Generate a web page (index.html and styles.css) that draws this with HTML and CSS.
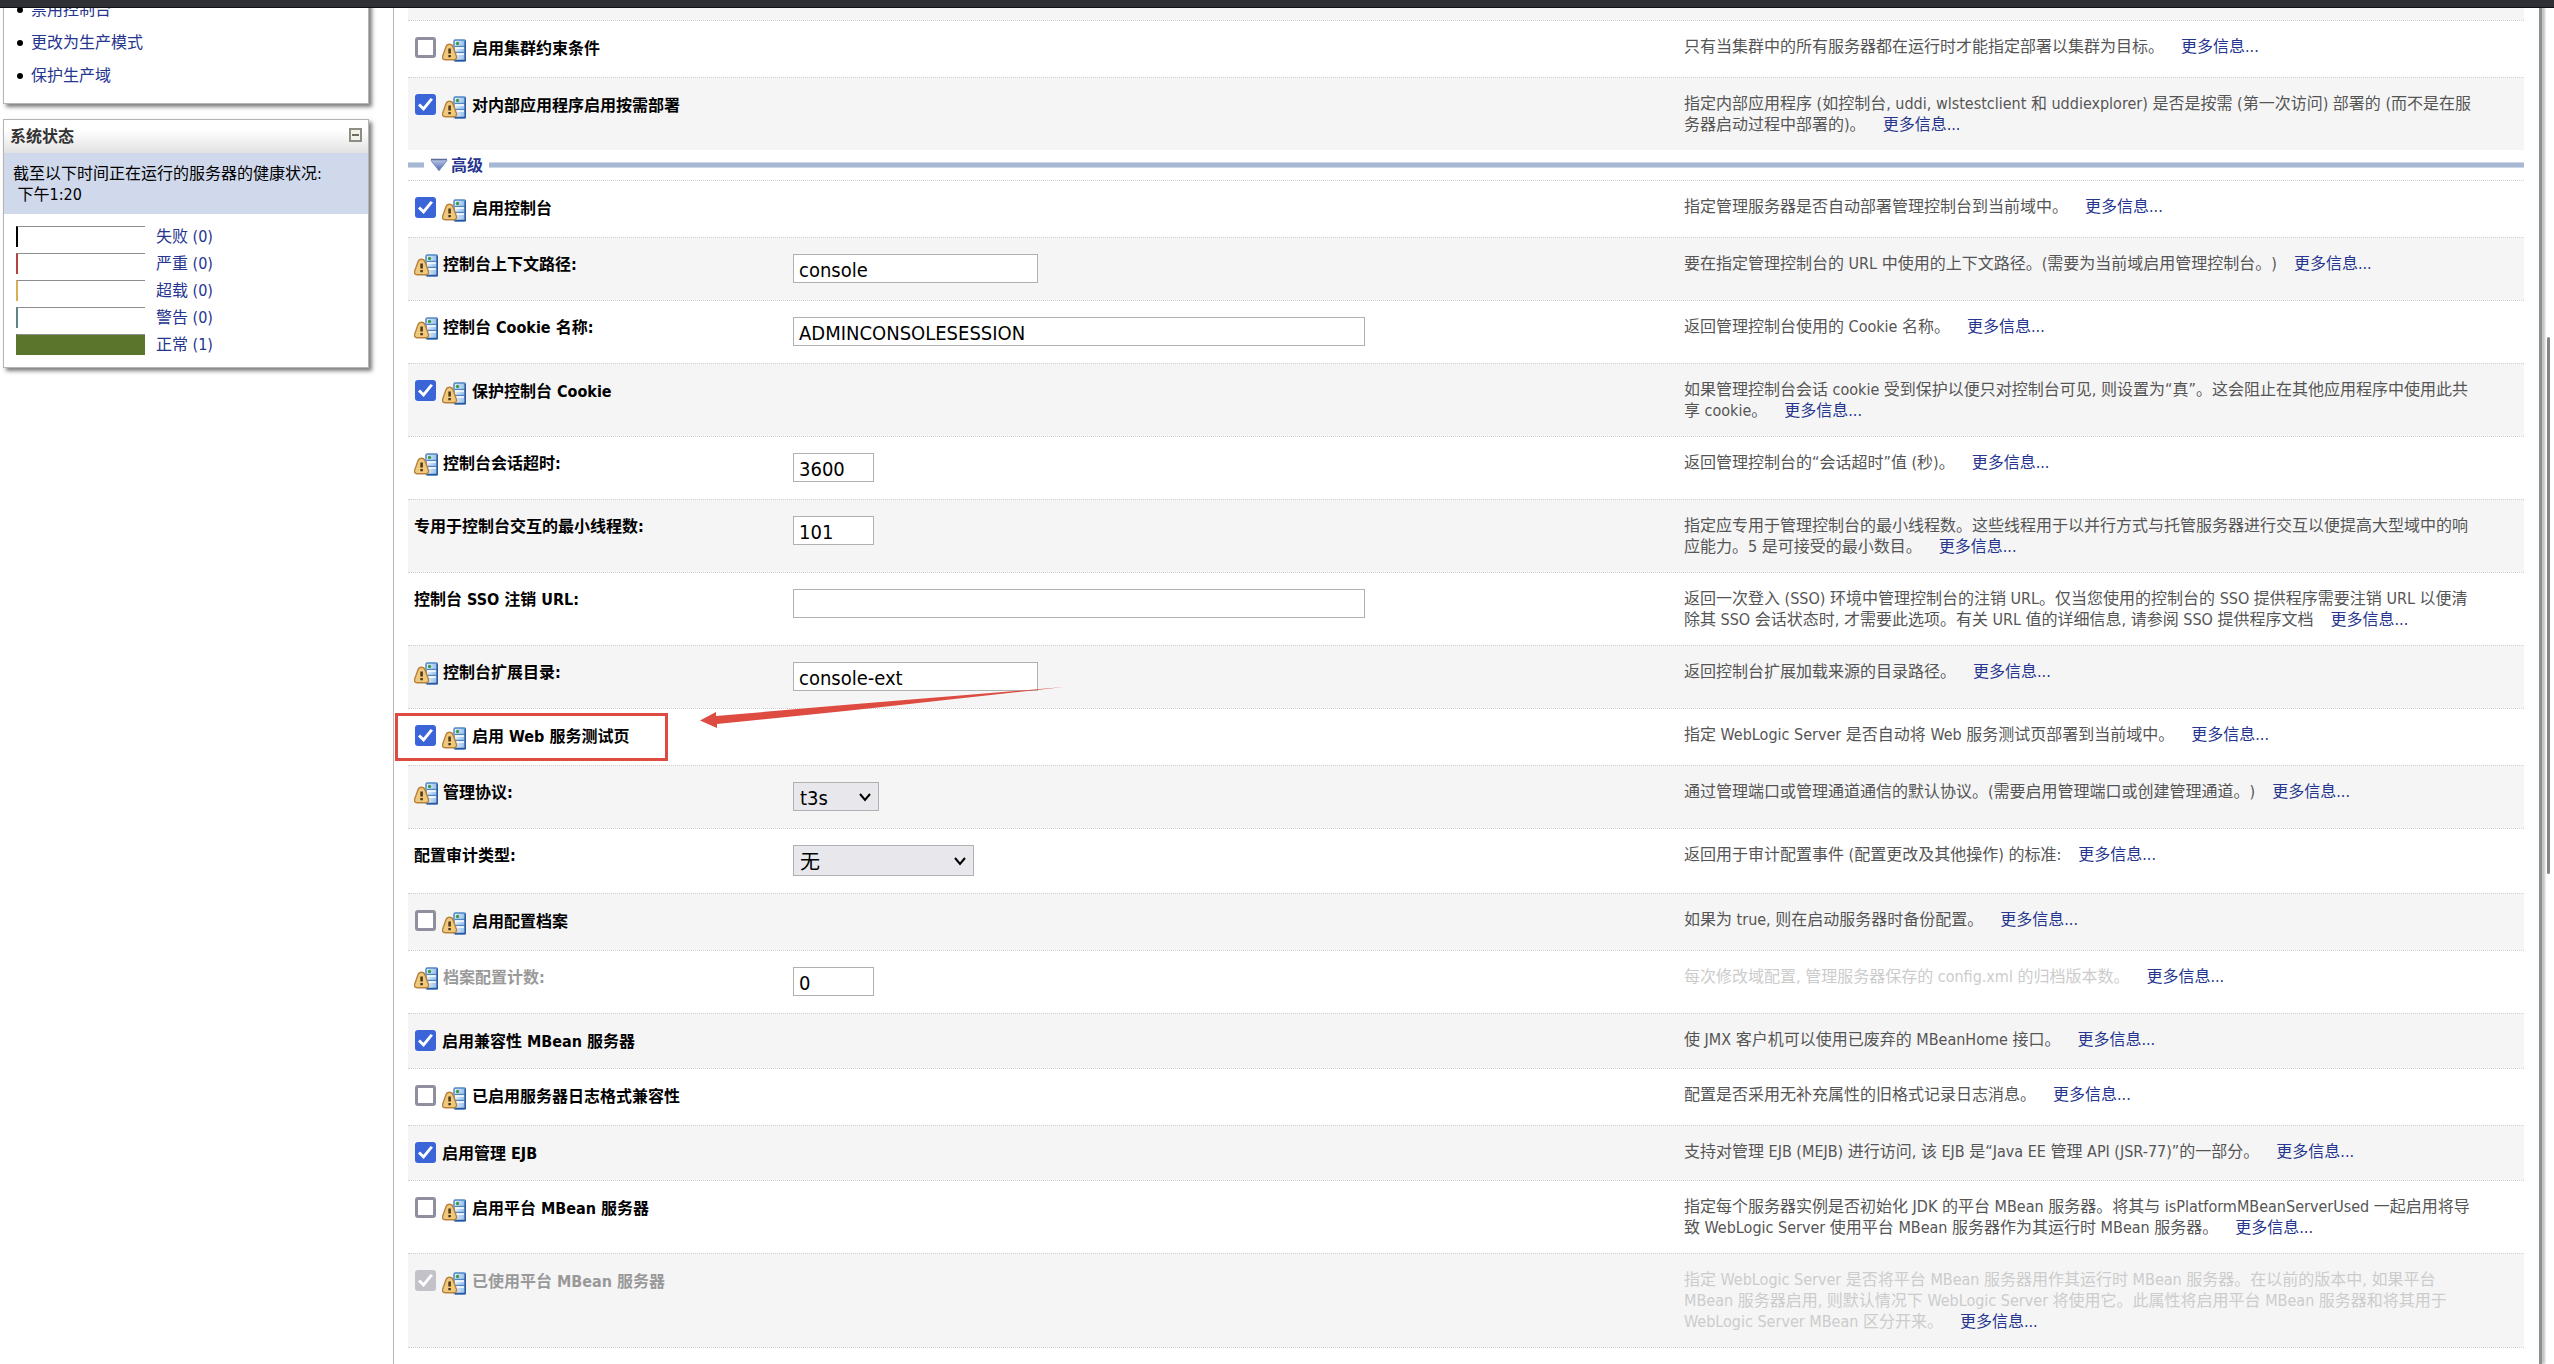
FILE: index.html
```html
<!DOCTYPE html>
<html lang="zh-CN">
<head>
<meta charset="utf-8">
<title>域配置</title>
<link rel="stylesheet" href="styles.css">
</head>
<body>
<svg class="defs" aria-hidden="true">
  <defs>
    <linearGradient id="srv" x1="0" x2="1"><stop offset="0" stop-color="#e8f3fc"/><stop offset="1" stop-color="#8fbbe8"/></linearGradient>
    <linearGradient id="tri" x1="0" y1="0" x2="0" y2="1"><stop offset="0" stop-color="#c3cfe8"/><stop offset="1" stop-color="#4a63b0"/></linearGradient>
    <symbol id="restart" viewBox="0 0 24 23">
      <rect x="12" y="1" width="11.500" height="21" rx="1.500" fill="url(#srv)" stroke="#4f86c6" stroke-width="1.500"/>
      <path d="M13 7.500h10M13 13.500h10" stroke="#4f86c6" stroke-width="1.500"/>
      <path d="M13 9h9M13 15h9" stroke="#fff" stroke-width="1.500"/>
      <path d="M23.200 2v19.500H13" fill="none" stroke="#2a569c" stroke-width="1.400"/>
      <circle cx="15.500" cy="4.500" r="1.700" fill="#3f9a4a"/>
      <path d="M7.500 5.300c2 0 3 1.200 3.600 2.800l3.200 8.800c.8 2.200-.2 3.900-2.300 3.900H3c-2.100 0-3.100-1.700-2.300-3.900l3.200-8.800c.6-1.600 1.600-2.800 3.600-2.800z" fill="#efc97e" stroke="#b9823c" stroke-width="1.400"/>
      <path d="M7.600 9.500v5M7.600 16v2.300" stroke="#4a3512" stroke-width="2.500"/>
    </symbol>
  </defs>
</svg>
<header class="topbar"></header>
<div class="page">
  <aside class="sidebar">
    <section class="box">
      <ul class="tasks">
        <li><a href="#">禁用控制台</a></li>
        <li><a href="#">更改为生产模式</a></li>
        <li><a href="#">保护生产域</a></li>
      </ul>
    </section>
    <section class="box">
      <div class="box-head"><h2>系统状态</h2><button type="button" class="collapse" aria-label="折叠"></button></div>
      <p class="asof">截至以下时间正在运行的服务器的健康状况:<br>&nbsp;下午1:20</p>
      <ul class="health">
        <li><span class="bar failed"></span><a href="#">失败 (0)</a></li>
        <li><span class="bar critical"></span><a href="#">严重 (0)</a></li>
        <li><span class="bar overloaded"></span><a href="#">超载 (0)</a></li>
        <li><span class="bar warning"></span><a href="#">警告 (0)</a></li>
        <li><span class="bar ok"></span><a href="#">正常 (1)</a></li>
      </ul>
    </section>
  </aside>
  <main class="content">
    <form class="form">
      <div class="group first">
        <div class="row"></div>
        <div class="row">
          <div class="name check"><input type="checkbox" id="f1"><svg class="icon"><use href="#restart"/></svg><label for="f1">启用集群约束条件</label></div>
          <p class="desc">只有当集群中的所有服务器都在运行时才能指定部署以集群为目标。<a href="#">更多信息...</a></p>
        </div>
        <div class="row">
          <div class="name check"><input type="checkbox" id="f2" checked><svg class="icon"><use href="#restart"/></svg><label for="f2">对内部应用程序启用按需部署</label></div>
          <p class="desc">指定内部应用程序 (如控制台, uddi, wlstestclient 和 uddiexplorer) 是否是按需 (第一次访问) 部署的 (而不是在服<br>务器启动过程中部署的)。<a href="#">更多信息...</a></p>
        </div>
      </div>
      <div class="advanced">
        <a href="#"><svg width="18" height="14" viewBox="0 0 18 14"><path d="M1 1h16v2L9 13 1 3z" fill="url(#tri)"/><path d="M1 1.500h16" stroke="#5a6c9c" stroke-width="1.500"/><path d="M1 2.500 9 12.500 17 2.500" fill="none" stroke="#7a8fc4" stroke-width="1"/></svg>高级</a>
      </div>
      <div class="group">
        <div class="row">
          <div class="name check"><input type="checkbox" id="g1" checked><svg class="icon"><use href="#restart"/></svg><label for="g1">启用控制台</label></div>
          <p class="desc">指定管理服务器是否自动部署管理控制台到当前域中。<a href="#">更多信息...</a></p>
        </div>
        <div class="row">
          <div class="name"><svg class="icon"><use href="#restart"/></svg><label for="g2">控制台上下文路径:</label></div>
          <div class="control"><input type="text" class="mid" id="g2" value="console"></div>
          <p class="desc">要在指定管理控制台的 URL 中使用的上下文路径。(需要为当前域启用管理控制台。)<a href="#">更多信息...</a></p>
        </div>
        <div class="row">
          <div class="name"><svg class="icon"><use href="#restart"/></svg><label for="g3">控制台 Cookie 名称:</label></div>
          <div class="control"><input type="text" class="long" id="g3" value="ADMINCONSOLESESSION"></div>
          <p class="desc">返回管理控制台使用的 Cookie 名称。<a href="#">更多信息...</a></p>
        </div>
        <div class="row">
          <div class="name check"><input type="checkbox" id="g4" checked><svg class="icon"><use href="#restart"/></svg><label for="g4">保护控制台 Cookie</label></div>
          <p class="desc">如果管理控制台会话 cookie 受到保护以便只对控制台可见, 则设置为“真”。这会阻止在其他应用程序中使用此共<br>享 cookie。<a href="#">更多信息...</a></p>
        </div>
        <div class="row">
          <div class="name"><svg class="icon"><use href="#restart"/></svg><label for="g5">控制台会话超时:</label></div>
          <div class="control"><input type="text" class="short" id="g5" value="3600"></div>
          <p class="desc">返回管理控制台的“会话超时”值 (秒)。<a href="#">更多信息...</a></p>
        </div>
        <div class="row">
          <div class="name"><label for="g6">专用于控制台交互的最小线程数:</label></div>
          <div class="control"><input type="text" class="short" id="g6" value="101"></div>
          <p class="desc">指定应专用于管理控制台的最小线程数。这些线程用于以并行方式与托管服务器进行交互以便提高大型域中的响<br>应能力。5 是可接受的最小数目。<a href="#">更多信息...</a></p>
        </div>
        <div class="row">
          <div class="name"><label for="g7">控制台 SSO 注销 URL:</label></div>
          <div class="control"><input type="text" class="long" id="g7"></div>
          <p class="desc">返回一次登入 (SSO) 环境中管理控制台的注销 URL。仅当您使用的控制台的 SSO 提供程序需要注销 URL 以便清<br>除其 SSO 会话状态时, 才需要此选项。有关 URL 值的详细信息, 请参阅 SSO 提供程序文档<a href="#">更多信息...</a></p>
        </div>
        <div class="row">
          <div class="name"><svg class="icon"><use href="#restart"/></svg><label for="g8">控制台扩展目录:</label></div>
          <div class="control"><input type="text" class="mid" id="g8" value="console-ext"></div>
          <p class="desc">返回控制台扩展加载来源的目录路径。<a href="#">更多信息...</a></p>
        </div>
        <div class="row marked">
          <div class="name check"><input type="checkbox" id="g9" checked><svg class="icon"><use href="#restart"/></svg><label for="g9">启用 Web 服务测试页</label></div>
          <p class="desc">指定 WebLogic Server 是否自动将 Web 服务测试页部署到当前域中。<a href="#">更多信息...</a></p>
          <span class="frame"></span>
          <svg class="arrow" width="364" height="42" viewBox="0 0 364 42"><path d="M0 33.500 16 25v4L150 17.500 364 0 150 23.500 17 37v4z" fill="#dd4b41"/></svg>
        </div>
        <div class="row">
          <div class="name"><svg class="icon"><use href="#restart"/></svg><label for="g10">管理协议:</label></div>
          <div class="control"><span class="pick narrow"><select id="g10"><option>t3s</option></select><svg width="14" height="12" viewBox="0 0 14 12"><path d="M2 3l5 6 5-6" fill="none" stroke="#000" stroke-width="2"/></svg></span></div>
          <p class="desc">通过管理端口或管理通道通信的默认协议。(需要启用管理端口或创建管理通道。)<a href="#">更多信息...</a></p>
        </div>
        <div class="row">
          <div class="name"><label for="g11">配置审计类型:</label></div>
          <div class="control"><span class="pick wide"><select id="g11"><option>无</option></select><svg width="14" height="12" viewBox="0 0 14 12"><path d="M2 3l5 6 5-6" fill="none" stroke="#000" stroke-width="2"/></svg></span></div>
          <p class="desc">返回用于审计配置事件 (配置更改及其他操作) 的标准:<a href="#">更多信息...</a></p>
        </div>
        <div class="row">
          <div class="name check"><input type="checkbox" id="g12"><svg class="icon"><use href="#restart"/></svg><label for="g12">启用配置档案</label></div>
          <p class="desc">如果为 true, 则在启动服务器时备份配置。<a href="#">更多信息...</a></p>
        </div>
        <div class="row off">
          <div class="name"><svg class="icon"><use href="#restart"/></svg><label for="g13">档案配置计数:</label></div>
          <div class="control"><input type="text" class="short" id="g13" value="0" disabled></div>
          <p class="desc">每次修改域配置, 管理服务器保存的 config.xml 的归档版本数。<a href="#">更多信息...</a></p>
        </div>
        <div class="row">
          <div class="name check plain"><input type="checkbox" id="g14" checked><label for="g14">启用兼容性 MBean 服务器</label></div>
          <p class="desc">使 JMX 客户机可以使用已废弃的 MBeanHome 接口。<a href="#">更多信息...</a></p>
        </div>
        <div class="row">
          <div class="name check"><input type="checkbox" id="g15"><svg class="icon"><use href="#restart"/></svg><label for="g15">已启用服务器日志格式兼容性</label></div>
          <p class="desc">配置是否采用无补充属性的旧格式记录日志消息。<a href="#">更多信息...</a></p>
        </div>
        <div class="row">
          <div class="name check plain"><input type="checkbox" id="g16" checked><label for="g16">启用管理 EJB</label></div>
          <p class="desc">支持对管理 EJB (MEJB) 进行访问, 该 EJB 是“Java EE 管理 API (JSR-77)”的一部分。<a href="#">更多信息...</a></p>
        </div>
        <div class="row">
          <div class="name check"><input type="checkbox" id="g17"><svg class="icon"><use href="#restart"/></svg><label for="g17">启用平台 MBean 服务器</label></div>
          <p class="desc">指定每个服务器实例是否初始化 JDK 的平台 MBean 服务器。将其与 isPlatformMBeanServerUsed 一起启用将导<br>致 WebLogic Server 使用平台 MBean 服务器作为其运行时 MBean 服务器。<a href="#">更多信息...</a></p>
        </div>
        <div class="row off">
          <div class="name check"><input type="checkbox" id="g18" checked disabled><svg class="icon"><use href="#restart"/></svg><label for="g18">已使用平台 MBean 服务器</label></div>
          <p class="desc">指定 WebLogic Server 是否将平台 MBean 服务器用作其运行时 MBean 服务器。在以前的版本中, 如果平台<br>MBean 服务器启用, 则默认情况下 WebLogic Server 将使用它。此属性将启用平台 MBean 服务器和将其用于<br>WebLogic Server MBean 区分开来。<a href="#">更多信息...</a></p>
        </div>
      </div>
    </form>
  </main>
</div>
<div class="scroll-thumb"></div>
</body>
</html>
```
FILE: styles.css
```css
* { box-sizing: border-box; }
html { height: 100%; overflow: hidden; }
body {
  margin: 0;
  min-height: 100%;
  background: #fff;
  color: #000;
  font: 16px/21px "DejaVu Sans Condensed", "Noto Sans", "Noto Sans CJK SC", sans-serif;
  text-spacing-trim: space-all;
}
ul, p, h2 { margin: 0; padding: 0; }
a { color: #26358f; text-decoration: none; }
.defs { position: absolute; width: 0; height: 0; }

.topbar {
  position: fixed;
  top: 0;
  left: 0;
  right: 0;
  z-index: 5;
  height: 8px;
  background: #2f3036;
  border-bottom: 1px solid #111;
}
.page {
  display: grid;
  grid-template-columns: 393px 1fr;
  min-height: 100vh;
  padding-right: 12px;
}

/* sidebar */
.sidebar { padding: 0 24px 0 3px; }
.box {
  border: 1px solid #b4b4b4;
  background: #fff;
  box-shadow: 3px 3px 4px #7d7d7d;
  margin-bottom: 15px;
}
.tasks { margin-top: -8px; padding: 0 0 11px 27px; line-height: 33px; }
.tasks li { list-style: none; position: relative; }
.tasks li::before {
  content: "";
  position: absolute;
  left: -14px;
  top: 14px;
  width: 6px;
  height: 6px;
  border-radius: 50%;
  background: #000;
}
.box-head {
  display: flex;
  justify-content: space-between;
  align-items: center;
  height: 33px;
  padding: 0 6px;
  background: linear-gradient(#fff 30%, #e2e2e2);
}
.box-head h2 { font-size: 16px; color: #333; }
.collapse {
  width: 13px;
  height: 14px;
  margin-bottom: 4px;
  padding: 0;
  border: 2px solid #8d8d83;
  background: linear-gradient(#6d6d60, #6d6d60) center / 7px 2px no-repeat #f2f2ea;
}
.asof { padding: 10px 9px 9px; background: #d0d9eb; }
.health { list-style: none; padding: 12px 12px 6px; }
.health li { display: flex; gap: 11px; height: 27px; }
.bar { width: 129px; height: 21px; border-top: 1px solid #8e8e8e; border-left: 2px solid #000; }
.critical { border-left-color: #b5423f; }
.overloaded { border-left-color: #d9ae54; }
.warning { border-left-color: #5d8588; }
.ok { border-left-color: #5b762c; background: #5b762c; }

/* settings form */
.content {
  border-left: 1px solid #b8b8b8;
  border-right: 3px solid #8a908c;
  box-shadow: 3px 0 2px #c4c4c4;
  padding: 8px 15px 0 14px;
}
.row {
  display: grid;
  grid-template-columns: 385fr 891fr 840fr;
  align-items: start;
  position: relative;
  padding: 15px 0;
  border-top: 1px dotted #cfcfcf;
}
.row:nth-child(even) { background: #f5f5f5; }
.first .row:nth-child(even) { background: #fff; }
.first .row:nth-child(odd) { background: #f5f5f5; }
.first .row:first-child { height: 12px; padding: 0; border: 0; }
.group:last-child { border-bottom: 1px dotted #cfcfcf; }
.name {
  grid-column: 1;
  display: flex;
  align-items: flex-start;
  gap: 5px;
  padding: 1px 0 0 6px;
  font-weight: bold;
}
.check { gap: 6px; padding-left: 7px; }
.check .icon { margin-top: 2px; }
.check label { padding-top: 1px; }
.check.plain label { margin-bottom: 1px; }
.icon { width: 24px; height: 23px; flex: none; }
.check:not(.plain) { min-height: 26px; }
.control { grid-column: 2; padding: 1px 0 2px; }
.desc { grid-column: 3; color: #555; white-space: nowrap; }
.desc a { margin-left: 17px; }
.off label { color: #999; }
.off .desc { color: #ccc; }

input[type="checkbox"] {
  appearance: none;
  flex: none;
  width: 21px;
  height: 21px;
  margin: 0;
  border: 3px solid #8f8f9d;
  border-radius: 3px;
  background: #fff;
}
input[type="checkbox"]:checked { border: 0; background: #3b64d8; display: grid; place-items: center; }
input[type="checkbox"]:checked::before {
  content: "";
  width: 15px;
  height: 13px;
  background: #fff;
  clip-path: polygon(0 58%, 14% 42%, 36% 68%, 84% 0, 100% 12%, 38% 100%);
}
input[type="checkbox"]:disabled { background: #c2c2c8; }
input[type="text"], select {
  display: block;
  height: 29px;
  margin: 0;
  border: 1px solid #b1b1b1;
  border-radius: 0;
  background: #fff;
  color: #000;
  font: 20px "DejaVu Sans Condensed", "Noto Sans", "Noto Sans CJK SC", sans-serif;
}
input[type="text"] { padding: 2px 5px 0; }
.short { width: 81px; }
.mid { width: 245px; }
.long { width: 572px; }
.pick { display: grid; align-items: center; }
.pick > * { grid-area: 1 / 1; }
.pick svg { justify-self: end; margin-right: 7px; pointer-events: none; }
.pick select { appearance: none; width: 100%; padding: 2px 6px 0; background: #e8e8ec; }
.narrow { width: 86px; }
.wide { width: 181px; }
.wide select { height: 31px; }

.advanced { display: flex; align-items: center; gap: 6px; height: 30px; }
.advanced::before, .advanced::after {
  content: "";
  width: 16px;
  height: 4px;
  background: #a7b8d4;
  border: solid #ccd7e6;
  border-width: 1px 0;
}
.advanced::after { flex: 1; }
.advanced a { display: flex; align-items: center; gap: 3px; font-weight: bold; }

/* annotation over the marked row */
.frame {
  position: absolute;
  left: -13px;
  top: 4px;
  width: 273px;
  height: 48px;
  border: 3px solid #dd4b41;
}
.arrow { position: absolute; left: 292px; top: -22px; z-index: 1; }

.scroll-thumb {
  position: fixed;
  right: 4px;
  top: 337px;
  width: 3px;
  height: 537px;
  border-radius: 2px;
  background: #858585;
}
```
